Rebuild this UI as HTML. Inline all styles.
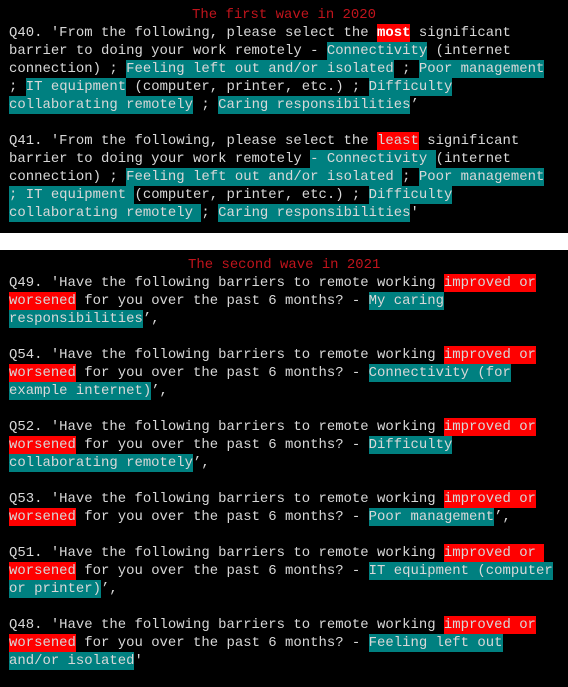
<!DOCTYPE html>
<html><head><meta charset="utf-8"><style>
html,body{margin:0;padding:0;background:#fff;width:568px;height:687px;overflow:hidden}
.sec{position:absolute;left:0;width:568px;background:#000}
pre{margin:0;position:absolute;left:9px;font-family:"Liberation Mono","DejaVu Sans Mono",monospace;font-size:13.94px;line-height:18px;color:#d8d8d8;white-space:pre}
.t{background:#008080;display:inline-block;height:18px;vertical-align:top}
.r{background:#f00;display:inline-block;height:18px;vertical-align:top}
.h{color:#c0141c;position:absolute;top:0}
b{color:#fff}
</style></head><body>
<div class="sec" style="top:0;height:233px">
<pre style="top:6px"><span class="h" style="left:183px">The first wave in 2020</span>
Q40. 'From the following, please select the <span class="r"><b>most</b></span> significant
barrier to doing your work remotely - <span class="t">Connectivity</span> (internet
connection) ; <span class="t">Feeling left out and/or isolated</span> ; <span class="t">Poor management</span>
; <span class="t">IT equipment</span> (computer, printer, etc.) ; <span class="t">Difficulty</span>
<span class="t">collaborating remotely</span> ; <span class="t">Caring responsibilities</span>’

Q41. 'From the following, please select the <span class="r">least</span> significant
barrier to doing your work remotely <span class="t">- Connectivity </span>(internet
connection) ; <span class="t">Feeling left out and/or isolated </span>; <span class="t">Poor management</span>
<span class="t">; IT equipment </span>(computer, printer, etc.) ; <span class="t">Difficulty</span>
<span class="t">collaborating remotely </span>; <span class="t">Caring responsibilities</span>'</pre>
</div>
<div class="sec" style="top:250px;height:437px">
<pre style="top:6px"><span class="h" style="left:179px">The second wave in 2021</span>
Q49. 'Have the following barriers to remote working <span class="r">improved or</span>
<span class="r">worsened</span> for you over the past 6 months? - <span class="t">My caring</span>
<span class="t">responsibilities</span>’,

Q54. 'Have the following barriers to remote working <span class="r">improved or</span>
<span class="r">worsened</span> for you over the past 6 months? - <span class="t">Connectivity (for</span>
<span class="t">example internet)</span>’,

Q52. 'Have the following barriers to remote working <span class="r">improved or</span>
<span class="r">worsened</span> for you over the past 6 months? - <span class="t">Difficulty</span>
<span class="t">collaborating remotely</span>’,

Q53. 'Have the following barriers to remote working <span class="r">improved or</span>
<span class="r">worsened</span> for you over the past 6 months? - <span class="t">Poor management</span>’,

Q51. 'Have the following barriers to remote working <span class="r">improved or </span>
<span class="r">worsened</span> for you over the past 6 months? - <span class="t">IT equipment (computer</span>
<span class="t">or printer)</span>’,

Q48. 'Have the following barriers to remote working <span class="r">improved or</span>
<span class="r">worsened</span> for you over the past 6 months? - <span class="t">Feeling left out</span>
<span class="t">and/or isolated</span>'</pre>
</div>
</body></html>
